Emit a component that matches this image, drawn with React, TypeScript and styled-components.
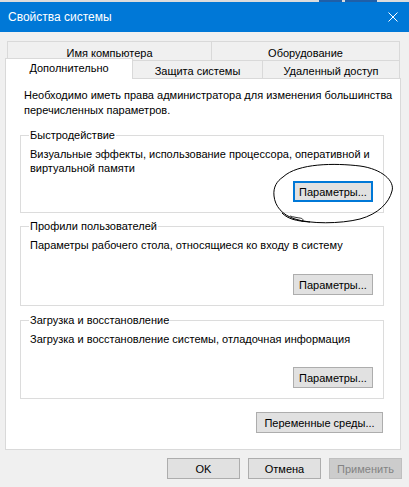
import React from "react";
import styled, { createGlobalStyle } from "styled-components";

const Global = createGlobalStyle`
  html, body { margin: 0; padding: 0; background: #f0f0f0; }
  * { box-sizing: border-box; }
  body { font-family: "Liberation Sans", Arial, sans-serif; font-size: 11px; color: #000; }
`;

const Window = styled.div`
  position: relative;
  width: 409px;
  height: 487px;
  background: #f0f0f0;
  display: flex;
  flex-direction: column;
  overflow: hidden;
`;

const TopStrip = styled.div`
  height: 2px;
  background: #dcdcdc;
  display: flex;
  justify-content: flex-end;
  padding-right: 32px;
  gap: 3px;
`;

const StripBlock = styled.div<{ $w: number }>`
  width: ${(p) => p.$w}px;
  height: 2px;
  background: #1f5fa8;
`;

const TitleBar = styled.div`
  height: 30px;
  background: #0078d7;
  color: #fff;
  display: flex;
  align-items: center;
  justify-content: space-between;
  padding: 0 11px 0 8px;
`;

const Title = styled.div`
  font-size: 12px;
`;

const CloseIcon = styled.svg`
  width: 10px;
  height: 10px;
  display: block;
`;

const Body = styled.div`
  padding: 9px 0 0 5px;
  display: flex;
  flex-direction: column;
`;

const TabRowTop = styled.div`
  display: flex;
  margin-left: 2px;
  width: 393px;
  height: 19px;
`;

const TabRowBottom = styled.div`
  display: flex;
  width: 395px;
  height: 18px;
`;

const Tab = styled.div<{ $w: number; $first?: boolean }>`
  width: ${(p) => p.$w}px;
  height: 100%;
  display: flex;
  justify-content: center;
  align-items: center;
  padding-top: 3px;
  background: #f0f0f0;
  border-top: 1px solid #d9d9d9;
  border-right: 1px solid #d9d9d9;
  border-left: ${(p) => (p.$first ? "1px solid #d9d9d9" : "none")};
  white-space: nowrap;
`;

const ActiveTab = styled.div<{ $w: number }>`
  position: relative;
  z-index: 1;
  width: ${(p) => p.$w}px;
  height: 21px;
  margin-top: -2px;
  background: #fff;
  border: 1px solid #d9d9d9;
  border-bottom: none;
  display: flex;
  justify-content: center;
  align-items: center;
  padding-bottom: 2px;
  white-space: nowrap;
`;

const Panel = styled.div`
  width: 396px;
  height: 372px;
  background: #fff;
  border: 1px solid #d9d9d9;
  padding: 9px 16px 0 14px;
  display: flex;
  flex-direction: column;
`;

const Intro = styled.p`
  margin: 0 0 0 4px;
  line-height: 15px;
  white-space: nowrap;
`;

const GroupBox = styled.div<{ $h: number; $mt: number }>`
  height: ${(p) => p.$h}px;
  margin-top: ${(p) => p.$mt}px;
  border: 1px solid #dcdcdc;
  display: flex;
  flex-direction: column;
  padding: 0 10px 10px 8px;
`;

const GroupLabel = styled.div`
  align-self: flex-start;
  margin-top: -8px;
  padding: 0 1px;
  background: #fff;
  line-height: 15px;
  white-space: nowrap;
`;

const GroupText = styled.p`
  margin: 4px 0 0 1px;
  line-height: 14px;
  white-space: nowrap;
`;

const Button = styled.button<{ $w: number; $focused?: boolean }>`
  width: ${(p) => p.$w}px;
  height: 21px;
  padding: 0;
  margin: 0;
  font-family: inherit;
  font-size: 11px;
  color: #000;
  background: #e1e1e1;
  border: ${(p) => (p.$focused ? "2px solid #0078d7" : "1px solid #adadad")};
  border-radius: 0;
  white-space: nowrap;
  &:disabled {
    background: #cccccc;
    border-color: #bfbfbf;
    color: #838383;
  }
`;

const GroupButton = styled(Button)`
  align-self: flex-end;
  margin-top: auto;
`;

const EnvRow = styled.div`
  display: flex;
  justify-content: flex-end;
  margin-top: 13px;
  padding-right: 1px;
`;

const Footer = styled.div`
  display: flex;
  justify-content: flex-end;
  gap: 8px;
  margin-top: 8px;
  padding-right: 7px;
`;

const Scribble = styled.svg`
  position: absolute;
  left: 0;
  top: 0;
  width: 409px;
  height: 487px;
  pointer-events: none;
  z-index: 2;
`;

export default function App() {
  return (
    <>
      <Global />
      <Window>
        <TopStrip>
          <StripBlock $w={23} />
          <StripBlock $w={32} />
        </TopStrip>
        <TitleBar>
          <Title>Свойства системы</Title>
          <CloseIcon viewBox="0 0 10 10">
            <path d="M0.5 0.5 L9.5 9.5 M9.5 0.5 L0.5 9.5" stroke="#fff" strokeWidth="1" />
          </CloseIcon>
        </TitleBar>
        <Body>
          <TabRowTop>
            <Tab $w={205} $first>Имя компьютера</Tab>
            <Tab $w={188}>Оборудование</Tab>
          </TabRowTop>
          <TabRowBottom>
            <ActiveTab $w={128}>Дополнительно</ActiveTab>
            <Tab $w={130}>Защита системы</Tab>
            <Tab $w={137}>Удаленный доступ</Tab>
          </TabRowBottom>
          <Panel>
            <Intro>
              Необходимо иметь права администратора для изменения большинства
              <br />
              перечисленных параметров.
            </Intro>
            <GroupBox $h={78} $mt={17}>
              <GroupLabel>Быстродействие</GroupLabel>
              <GroupText>
                Визуальные эффекты, использование процессора, оперативной и
                <br />
                виртуальной памяти
              </GroupText>
              <GroupButton $w={80} $focused>
                Параметры...
              </GroupButton>
            </GroupBox>
            <GroupBox $h={80} $mt={13}>
              <GroupLabel>Профили пользователей</GroupLabel>
              <GroupText>Параметры рабочего стола, относящиеся ко входу в систему</GroupText>
              <GroupButton $w={80}>Параметры...</GroupButton>
            </GroupBox>
            <GroupBox $h={79} $mt={14}>
              <GroupLabel>Загрузка и восстановление</GroupLabel>
              <GroupText>Загрузка и восстановление системы, отладочная информация</GroupText>
              <GroupButton $w={80}>Параметры...</GroupButton>
            </GroupBox>
            <EnvRow>
              <Button $w={127}>Переменные среды...</Button>
            </EnvRow>
          </Panel>
          <Footer>
            <Button $w={73}>OK</Button>
            <Button $w={73}>Отмена</Button>
            <Button $w={73} disabled>
              Применить
            </Button>
          </Footer>
        </Body>
        <Scribble viewBox="0 0 409 487">
          <path
            d="M283 177 C298 163 335 163 360 166 C382 169 395 181 392 191 C389 203 378 214 360 219 C340 224 310 224 295 219 C282 215 275 206 274 196 C273 187 277 181 283 177"
            fill="none"
            stroke="#000"
            strokeWidth="1"
          />
          <path d="M282 213 C288 219 296 221 310 222" fill="none" stroke="#000" strokeWidth="1" />
          <path d="M290 216 C300 219 305 217 302 222" fill="none" stroke="#000" strokeWidth="0.8" />
        </Scribble>
      </Window>
    </>
  );
}
